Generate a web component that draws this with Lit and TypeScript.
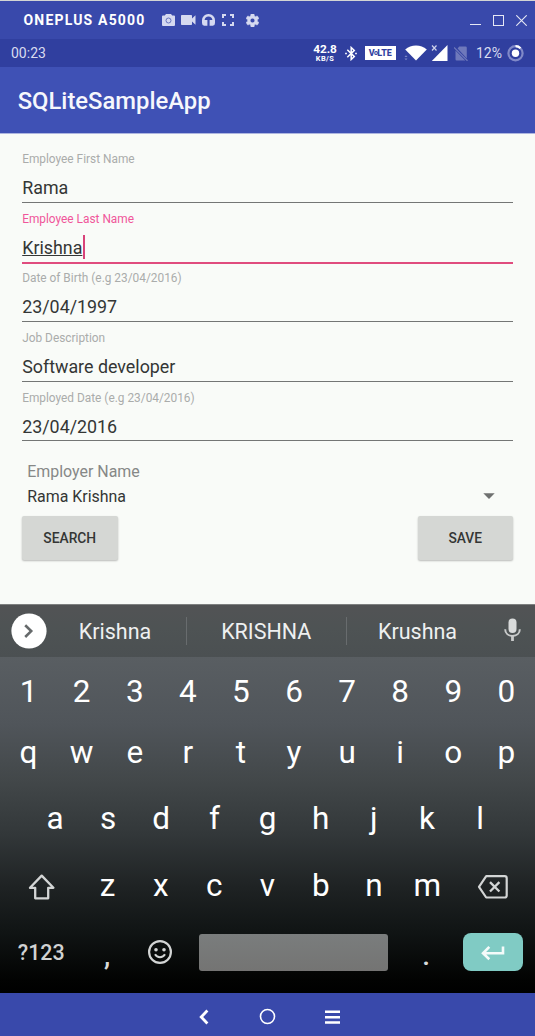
import { LitElement, html, css, nothing } from "lit";
import { customElement, property } from "lit/decorators.js";
import { classMap } from "lit/directives/class-map.js";

@customElement("form-field")
class FormField extends LitElement {
  @property() label = "";
  @property() value = "";
  @property({ type: Boolean, reflect: true }) focused = false;

  static styles = css`
    :host { display: flex; flex-direction: column; height: 59.6px; box-sizing: border-box; padding-top: 7.8px; }
    .label { font-size: 11.87px; line-height: 16px; color: #aaacab; white-space: nowrap; }
    .row { margin-top: 9.1px; height: 24px; display: flex; align-items: center; }
    .value { font-size: 17.85px; line-height: 24px; color: #343635; white-space: nowrap; }
    .line { margin-top: auto; height: 1px; background: #747675; }
    .caret { width: 2px; height: 24px; background: #d8437a; margin: -2px 0 0 0.3px; }
    :host([focused]) .label { color: #f0569a; }
    :host([focused]) .value { text-decoration: underline; text-decoration-thickness: 1px; text-underline-offset: 1px; }
    :host([focused]) .line { height: 2px; margin-bottom: -1px; background: #e04c7e; }
  `;

  render() {
    return html`
      <div class="label">${this.label}</div>
      <div class="row">
        <span class="value">${this.value}</span>
        ${this.focused ? html`<span class="caret"></span>` : nothing}
      </div>
      <div class="line"></div>
    `;
  }
}

@customElement("app-root")
class AppRoot extends LitElement {
  static styles = css`
    :host {
      display: flex; flex-direction: column; width: 535px; height: 1036px; overflow: hidden;
      font-family: Roboto, "Liberation Sans", sans-serif; background: #f9fbf8;
    }
    svg { display: block; flex: none; }

    .titlebar {
      box-sizing: border-box; height: 39px; flex: none; border-top: 1px solid #d3d5d4; background: #3949ab;
      display: flex; align-items: center; padding: 0 8px 0 23.5px; color: #fff;
    }
    .device { width: 138.5px; font-size: 14px; font-weight: 700; letter-spacing: 1.18px; white-space: nowrap; }
    .tools { display: flex; align-items: center; color: #d5d9f0; }
    .tools .video { margin-left: 6px; }
    .tools .head { margin-left: 5.5px; }
    .tools .full { margin-left: 7.5px; }
    .tools .gear { margin-left: 12px; }
    .window { margin-left: auto; display: flex; align-items: center; gap: 12px; padding: 1px 0.5px 0 0; }

    .status {
      height: 28px; flex: none; background: #303f9f; color: #d9dcef; display: flex; align-items: center;
      padding: 0 11.5px 0 11px; font-size: 14px; box-sizing: border-box;
    }
    .indicators { margin-left: auto; display: flex; align-items: center; }
    .speed { display: flex; flex-direction: column; align-items: center; font-weight: 700; color: #fff; width: 24px; }
    .rate { font-size: 11.8px; line-height: 11px; letter-spacing: -0.1px; }
    .unit { font-size: 7.4px; line-height: 7px; letter-spacing: 0.4px; }
    .bt { margin-left: 7.5px; }
    .volte {
      margin-left: 8.5px; width: 30.5px; height: 14px; background: #fff; color: #303f9f; display: flex;
      align-items: center; justify-content: center; font-size: 9px; font-weight: 800; letter-spacing: -0.1px;
    }
    .volte .o { font-size: 7px; margin: 0 -0.6px; }
    .wifi { margin-left: 8px; }
    .signal { margin-left: 4px; }
    .sim { margin-left: 6.5px; }
    .percent { margin-left: 8px; width: 30.5px; }

    .appbar {
      height: 67px; flex: none; box-sizing: border-box; background: #3f51b5; border-bottom: 1px solid #aeb6e0;
      display: flex; align-items: center; padding: 2px 0 0 17.7px; color: #f6f7fc; font-size: 23.8px; font-weight: 500;
    }

    .form { height: 470px; flex: none; box-sizing: border-box; padding: 9.4px 22px 0 22.2px; }
    .hint { margin: 18.2px 0 0 5px; font-size: 15.95px; line-height: 24px; color: #868887; }
    .spinner {
      margin: 0.9px 18px 0 5px; height: 24px; display: flex; align-items: center; justify-content: space-between;
      font-size: 15.95px; color: #343635;
    }
    .buttons { margin: 7.8px 0 0 -0.2px; display: flex; justify-content: space-between; }
    .button {
      width: 95.5px; height: 43.5px; border-radius: 2px; background: #d5d7d4; color: #343635; font-size: 13.8px;
      font-weight: 500; display: flex; align-items: center; justify-content: center; box-sizing: border-box; padding-top: 1px;
      box-shadow: 0 1px 2px rgba(0, 0, 0, 0.26);
    }

    .keyboard { height: 389px; flex: none; display: flex; flex-direction: column; color: #fff; }
    .suggest {
      height: 53px; flex: none; box-sizing: border-box; border-top: 1px solid #7e8080;
      background: linear-gradient(#525355, #4e5354 45%, #4b5052); display: flex; align-items: center; padding-left: 10.5px;
    }
    .chevron { margin-top: -1px; }
    .word {
      width: 160.5px; height: 28px; line-height: 29px; box-sizing: border-box; text-align: center; font-size: 21.5px;
      color: #eef0f0; border-right: 1px solid #686c6e;
    }
    .word.first { width: 140px; padding-right: 2px; }
    .word.last { border: 0; width: 141px; }
    .mic { margin-left: 15.5px; margin-top: -2px; }

    .keys {
      flex: 1; box-sizing: border-box; padding: 4px 2px 0 2px;
      background: linear-gradient(#595e62 0, #50555a 20%, #424749 37%, #323739 53%, #1f2324 68%, #101414 82%, #020302 96%, #000 100%);
    }
    .keyrow { display: flex; height: 60px; }
    .keyrow.r2 { margin-top: 1px; }
    .keyrow.r3 { margin-top: 6.3px; padding: 0 26.4px; }
    .keyrow.r4 { margin-top: 7.2px; }
    .keyrow.r5 { margin-top: 6.7px; }
    .key { flex: 1; display: flex; align-items: center; justify-content: center; font-size: 31.5px; }
    .side { width: 79px; flex: none; display: flex; align-items: center; justify-content: center; }
    .side svg { margin-top: 3px; }
    .sym { width: 78.5px; flex: none; display: flex; align-items: center; justify-content: center; font-size: 21.4px; font-weight: 500; color: #d0d2d2; }
    .punct { width: 53.1px; flex: none; display: flex; align-items: center; justify-content: center; font-size: 28px; font-weight: 500; color: #d8dada; padding-top: 7px; box-sizing: border-box; }
    .emoji { width: 53.1px; flex: none; display: flex; align-items: center; justify-content: center; }
    .space { width: 189px; height: 37px; margin: 11.5px 12px 0; border-radius: 3px; background: linear-gradient(#7a7d7d, #747473); flex: none; }
    .enter { width: 59.5px; height: 38.5px; margin: 10.5px 0 0 10.5px; border-radius: 8px; background: #80cbc4; flex: none; display: flex; align-items: center; justify-content: center; }
    .enter svg { margin-top: 2px; }

    .nav {
      height: 43px; flex: none; background: #3949ab; display: flex; align-items: center; justify-content: center; padding-top: 4px;
      box-sizing: border-box; padding-left: 3px;
    }
    .nav .home { margin: 0 48.5px 0 50.5px; }
  `;

  private fields = [
    { label: "Employee First Name", value: "Rama", focused: false },
    { label: "Employee Last Name", value: "Krishna", focused: true },
    { label: "Date of Birth (e.g 23/04/2016)", value: "23/04/1997", focused: false },
    { label: "Job Description", value: "Software developer", focused: false },
    { label: "Employed Date (e.g 23/04/2016)", value: "23/04/2016", focused: false },
  ];

  private keys(chars: string) {
    return [...chars].map((c) => html`<div class="key">${c}</div>`);
  }

  private titleBar() {
    return html`
      <div class="titlebar">
        <div class="device">ONEPLUS A5000</div>
        <div class="tools">
          <svg width="13" height="12" viewBox="0 0 13 12"><path fill="currentColor" d="M4 0h5l1.2 1.5H12a1 1 0 0 1 1 1V11a1 1 0 0 1-1 1H1a1 1 0 0 1-1-1V2.500a1 1 0 0 1 1-1h1.800z"/><circle cx="6.500" cy="6.500" r="2.500" fill="none" stroke="#6673bf" stroke-width="1"/></svg>
          <svg class="video" width="15" height="10" viewBox="0 0 15 10"><path fill="currentColor" d="M.8 0h9.400q.8 0 .8.800V3.500L14.500.3v9.400L11 6.500v2.700q0 .8-.8.800H.8Q0 10 0 9.200V.8Q0 0 .8 0z"/></svg>
          <svg class="head" width="13" height="12" viewBox="0 0 13 12"><path fill="currentColor" d="M6.500 0A6.400 6.400 0 0 0 0 6.300V9q0 2.500 2.200 2.800H5.400V6H2.600A4 4 0 0 1 6.500 2.500a4 4 0 0 1 3.900 3.500H7.600v5.800h3.200Q13 11.500 13 9V6.300A6.400 6.400 0 0 0 6.500 0z"/></svg>
          <svg class="full" width="12" height="12" viewBox="0 0 12 12"><path fill="none" stroke="currentColor" stroke-width="2" d="M1 4V1h3M8 1h3v3M11 8v3H8M4 11H1V8"/></svg>
          <svg class="gear" width="13" height="13" viewBox="2 2 20 20"><path fill="currentColor" stroke="currentColor" stroke-width=".8" d="M19.430 12.980c.04-.32.07-.64.07-.98s-.03-.66-.07-.98l2.110-1.650c.19-.15.24-.42.12-.64l-2-3.460c-.12-.22-.39-.3-.61-.22l-2.490 1c-.52-.4-1.080-.73-1.690-.98l-.38-2.650C14.460 2.180 14.250 2 14 2h-4c-.25 0-.46.18-.49.42l-.38 2.650c-.61.25-1.170.59-1.690.98l-2.490-1c-.23-.09-.49 0-.61.22l-2 3.460c-.13.22-.07.49.12.64l2.110 1.650c-.04.32-.07.65-.07.98s.03.66.07.98l-2.110 1.650c-.19.15-.24.42-.12.64l2 3.460c.12.22.39.3.61.22l2.490-1c.52.4 1.080.73 1.690.98l.38 2.650c.03.24.24.42.49.42h4c.25 0 .46-.18.49-.42l.38-2.650c.61-.25 1.170-.59 1.690-.98l2.490 1c.23.09.49 0 .61-.22l2-3.460c.12-.22.07-.49-.12-.64l-2.110-1.650zM12 15.500c-1.930 0-3.500-1.570-3.500-3.500s1.570-3.500 3.500-3.500 3.500 1.570 3.500 3.500-1.570 3.500-3.500 3.500z"/></svg>
        </div>
        <div class="window">
          <svg width="11" height="11" viewBox="0 0 11 11"><path stroke="#e6e8f5" d="M0 9.500h11"/></svg>
          <svg width="11" height="11" viewBox="0 0 11 11"><rect x=".5" y=".5" width="10" height="10" fill="none" stroke="#e6e8f5"/></svg>
          <svg width="11" height="11" viewBox="0 0 11 11"><path stroke="#e6e8f5" stroke-width="1.100" d="M.3.3l10.400 10.400M10.700.3L.3 10.700"/></svg>
        </div>
      </div>
    `;
  }

  private statusBar() {
    return html`
      <div class="status">
        <span>00:23</span>
        <div class="indicators">
          <div class="speed"><span class="rate">42.8</span><span class="unit">KB/S</span></div>
          <svg class="bt" width="12" height="15" viewBox="0 0 12 15"><path fill="none" stroke="#fff" stroke-width="1.500" d="M2.300 3.800L9.300 10.600 6.200 13.500V1.500L9.300 4.400 2.300 11.200"/><path stroke="#dfe2f3" stroke-width="1.600" d="M0 7.500h2M10 7.500h2"/></svg>
          <div class="volte"><span>V</span><span class="o">o</span><span>LTE</span></div>
          <svg class="wifi" width="23" height="16" viewBox="0 0 23 16"><path fill="#fff" d="M1.200 4.600Q5.800.6 12 .6T22.800 4.600L12 15.600z"/><path fill="#7d87c6" d="M.5 12l1.500-1.800L3.500 12zM.5 13.500h3L2 15.300z"/></svg>
          <svg class="signal" width="17" height="16" viewBox="0 0 17 16"><path fill="#fff" d="M16.500 0v16H.8z"/><path stroke="#cdd1ea" stroke-width="1.200" d="M1 .5l4.500 5M5.500.5L1 5.500"/></svg>
          <svg class="sim" width="14" height="15" viewBox="0 0 14 15"><path fill="#6f79bb" d="M5.200.5h6.300q1.300 0 1.300 1.300v10.600L3.600 2.400zM1.500 4.600l9.800 9.900H2.700q-1.200 0-1.200-1.200z"/><path stroke="#6f79bb" stroke-width="1.200" d="M0 1.500l13.500 13.300"/></svg>
          <span class="percent">12%</span>
          <svg width="17" height="18" viewBox="0 0 17 18"><circle cx="8.500" cy="9.300" r="7.100" fill="none" stroke="#8089c8" stroke-width="2.200"/><path fill="none" stroke="#fff" stroke-width="2.200" d="M8.500 2.200a7.100 7.100 0 0 1 5 2.100"/><circle cx="8.500" cy="9.300" r="3.700" fill="#fff"/></svg>
        </div>
      </div>
    `;
  }

  private keyboard() {
    const words = ["Krishna", "KRISHNA", "Krushna"];
    return html`
      <div class="keyboard">
        <div class="suggest">
          <svg class="chevron" width="36" height="36" viewBox="0 0 36 36"><circle cx="18" cy="18" r="17.600" fill="#fff"/><path fill="none" stroke="#666a6b" stroke-width="2.600" d="M14.200 12.200l6 5.900-6 5.900"/></svg>
          ${words.map((w, i) => html`<div class=${classMap({ word: true, first: i === 0, last: i === 2 })}>${w}</div>`)}
          <svg class="mic" width="17" height="24" viewBox="0 0 17 24"><rect x="4.500" y=".5" width="8" height="14.500" rx="4" fill="#d9dbdb"/><path fill="none" stroke="#c9cbcb" stroke-width="2" d="M1.200 11.200c0 4.200 3.100 6.700 7.300 6.700s7.300-2.500 7.300-6.700"/><path stroke="#c9cbcb" stroke-width="2.800" d="M8.500 18v5"/></svg>
        </div>
        <div class="keys">
          <div class="keyrow">${this.keys("1234567890")}</div>
          <div class="keyrow r2">${this.keys("qwertyuiop")}</div>
          <div class="keyrow r3">${this.keys("asdfghjkl")}</div>
          <div class="keyrow r4">
            <div class="side"><svg width="28" height="28" viewBox="0 0 28 28"><path fill="none" stroke="#d3d5d5" stroke-width="2.300" stroke-linejoin="round" d="M13.700 2.600L2 14.800H7.200v10.500h13V14.800h5.200z"/></svg></div>
            ${this.keys("zxcvbnm")}
            <div class="side"><svg width="32" height="26" viewBox="0 0 32 26"><path fill="none" stroke="#d3d5d5" stroke-width="2.200" stroke-linejoin="round" d="M9.200 2.200h18.500q2 0 2 2v17.300q0 2-2 2H9.200L2 12.800z"/><path stroke="#d3d5d5" stroke-width="2.300" d="M13 8.100l9.400 9.400M22.400 8.100L13 17.500"/></svg></div>
          </div>
          <div class="keyrow r5">
            <div class="sym">?123</div>
            <div class="punct">,</div>
            <div class="emoji"><svg width="26" height="26" viewBox="0 0 26 26"><circle cx="13" cy="13" r="10.900" fill="none" stroke="#d3d5d5" stroke-width="2.200"/><circle cx="9" cy="10.800" r="1.800" fill="#d3d5d5"/><circle cx="17" cy="10.800" r="1.800" fill="#d3d5d5"/><path fill="none" stroke="#d3d5d5" stroke-width="2" d="M8 15.300q1.700 2.900 5 2.900t5-2.900"/></svg></div>
            <div class="space"></div>
            <div class="punct">.</div>
            <div class="enter"><svg width="24" height="16" viewBox="0 0 24 16"><path fill="none" stroke="#f4fbfa" stroke-width="2.600" d="M22 1.500v6.800H2.300M8.300 1.800L2 8.300l6.300 6"/></svg></div>
          </div>
        </div>
      </div>
    `;
  }

  render() {
    return html`
      ${this.titleBar()}
      ${this.statusBar()}
      <div class="appbar">SQLiteSampleApp</div>
      <div class="form">
        ${this.fields.map((f) => html`<form-field .label=${f.label} .value=${f.value} .focused=${f.focused}></form-field>`)}
        <div class="hint">Employer Name</div>
        <div class="spinner">
          <span>Rama Krishna</span>
          <svg width="12" height="6" viewBox="0 0 12 6"><path fill="#6f7170" d="M.3.200h11.400L6 5.900z"/></svg>
        </div>
        <div class="buttons">
          <div class="button">SEARCH</div>
          <div class="button">SAVE</div>
        </div>
      </div>
      ${this.keyboard()}
      <div class="nav">
        <svg width="10" height="16" viewBox="0 0 10 16"><path fill="none" stroke="#fff" stroke-width="2.800" d="M8.400 1.500L2.200 8l6.200 6.500"/></svg>
        <svg class="home" width="17" height="17" viewBox="0 0 17 17"><circle cx="8.500" cy="8.500" r="7" fill="none" stroke="#fff" stroke-width="1.600"/></svg>
        <svg width="15" height="14" viewBox="0 0 15 14"><path stroke="#fff" stroke-width="2.500" d="M0 1.700h15M0 7.200h15M0 12.500h15"/></svg>
      </div>
    `;
  }
}
